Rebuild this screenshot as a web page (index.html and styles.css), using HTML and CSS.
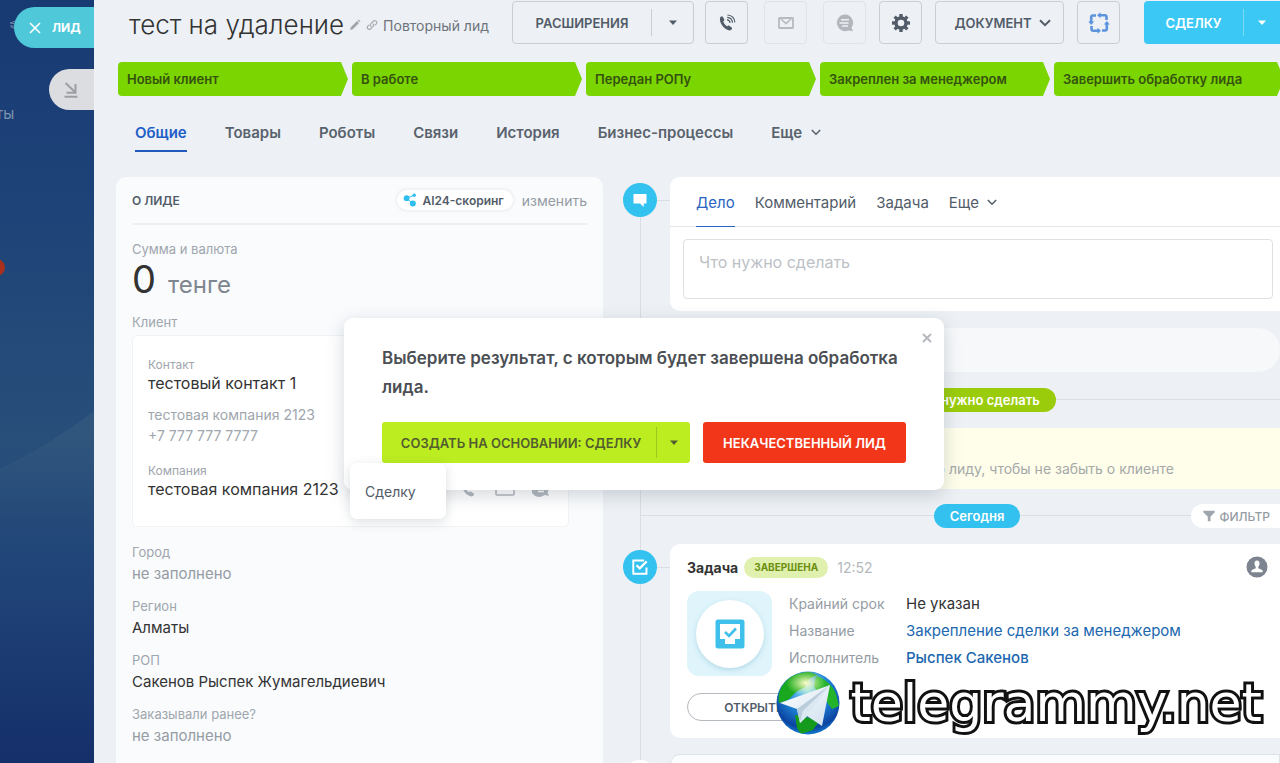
FILE: index.html
```html
<!DOCTYPE html>
<html lang="ru">
<head>
<meta charset="utf-8">
<title>Лид: тест на удаление</title>
<link rel="stylesheet" href="styles.css">
</head>
<body>
<div class="app">
  <aside class="rail">
    <svg class="rail-hill" viewBox="0 0 94 120" preserveAspectRatio="none" aria-hidden="true"><defs><linearGradient id="hill" x1="0" y1="0" x2="0" y2="1"><stop offset="0" stop-color="#5f8090" stop-opacity=".18"/><stop offset="1" stop-color="#5f8090" stop-opacity="0"/></linearGradient></defs><path d="M0 58Q50 34 94 0V120H0z" fill="url(#hill)"/></svg>
    <span class="rail-text">ты</span>
    <span class="rail-dot"></span>
    <svg class="rail-mark" viewBox="0 0 8 10" aria-hidden="true"><path d="M7 1L1 3l6 1M1 6h6M2 7l5 2" fill="none" stroke="#6d87a8" stroke-width="1"/></svg>
    <button class="rail-tab" type="button">
      <svg width="12" height="12" viewBox="0 0 12 12" aria-hidden="true"><path d="M1 1l10 10M11 1L1 11" stroke="#fff" stroke-width="1.6" fill="none"/></svg>
      <span>ЛИД</span>
    </button>
    <button class="rail-tab rail-tab-min" type="button" aria-label="Свернуть">
      <svg width="14" height="16" viewBox="0 0 14 16" aria-hidden="true"><path d="M1.5 1l9.5 9M11.500 2v8.700H2.500M.5 14.800h13" stroke="#9b9ea4" stroke-width="2" fill="none"/></svg>
    </button>
  </aside>

  <main class="main">
    <header class="head">
      <div class="title-group">
        <h1 class="title">тест на удаление</h1>
        <svg width="12" height="12" viewBox="0 0 12 12" aria-hidden="true"><path d="M1 11l.8-2.8L8 2l2 2-6.200 6.200zM8.700 1.300L9.500.5l2 2-.8.8z" fill="#a0a5ab"/></svg>
        <svg width="12" height="12" viewBox="0 0 12 12" aria-hidden="true"><g fill="none" stroke="#a5aab0" stroke-width="1.200"><path d="M5 7.500a2 2 0 0 1 0-2.800L7.500 2a2 2 0 0 1 2.800 2.800L9 6.200"/><path d="M7 4.600a2 2 0 0 1 0 2.800L4.600 10a2 2 0 0 1-2.800-2.800L3 6"/></g></svg>
        <span class="subtitle">Повторный лид</span>
      </div>
      <div class="actions">
        <div class="split">
          <button class="split-main" type="button">РАСШИРЕНИЯ</button>
          <button class="split-caret" type="button" aria-label="Открыть меню"><svg width="10" height="6" viewBox="0 0 10 6" aria-hidden="true"><path d="M1 .5h8L5 5z" fill="currentColor"/></svg></button>
        </div>
        <button class="btn icon-btn" type="button" aria-label="Позвонить"><svg width="18" height="18" viewBox="0 0 18 18" aria-hidden="true"><path d="M2.200 3.500C3 2.300 4.200 1.900 4.900 2.900l1.300 2.300c.5 1-.2 1.600-.9 2.200.7 2 2 3.700 3.900 4.900.8-.7 1.600-1 2.400-.4l2.100 1.500c.9.8.3 1.900-.8 2.700C9 18.500.2 9.500 2.200 3.500z" fill="#525c69"/><path d="M9 5.600c1.800.3 2.900 1.500 3.100 3.300M9.200 3.300c3.100.2 5.100 2.200 5.300 5.400M9.400 1C13.800 1.300 16.500 4 16.800 8.400" fill="none" stroke="#525c69" stroke-width="1.200"/></svg></button>
        <button class="btn icon-btn off gap-m" type="button" disabled aria-label="Письмо"><svg width="16" height="12" viewBox="0 0 16 12" aria-hidden="true"><rect x="1" y="1" width="14" height="10" rx=".5" fill="none" stroke="#b7bbc1" stroke-width="1.800"/><path d="M3 2l5 4.600L13 2" fill="none" stroke="#b7bbc1" stroke-width="1.600"/></svg></button>
        <button class="btn icon-btn off gap-m" type="button" disabled aria-label="Чат"><svg width="18" height="18" viewBox="0 0 18 18" aria-hidden="true"><path d="M9 .5a8.300 8.300 0 1 0 3.500 15.900L17 17.300l-1.500-3.600A8.300 8.300 0 0 0 9 .5z" fill="#b3b7bd"/><path d="M5 5.800h8M3.500 8.900h9M6 12h6" stroke="#eef2f5" stroke-width="1.500"/></svg></button>
        <button class="btn icon-btn gap-s" type="button" aria-label="Настройки"><svg width="18" height="18" viewBox="-9 -9 18 18" aria-hidden="true"><circle r="5" fill="none" stroke="#525c69" stroke-width="3.400"/><g fill="#525c69"><g id="cog"><rect x="-1.700" y="-9" width="3.400" height="3.500"/><rect x="-1.700" y="5.500" width="3.400" height="3.500"/><rect x="-9" y="-1.700" width="3.500" height="3.400"/><rect x="5.500" y="-1.700" width="3.500" height="3.400"/></g><use href="#cog" transform="rotate(45)"/></g></svg></button>
        <button class="btn doc-btn gap-s" type="button">ДОКУМЕНТ <svg width="12" height="8" viewBox="0 0 12 8" aria-hidden="true"><path d="M1 1.200l5 5 5-5" fill="none" stroke="#525c69" stroke-width="2"/></svg></button>
        <button class="btn icon-btn gap-s" type="button" aria-label="Роботы"><svg width="22" height="22" viewBox="0 0 22 22" aria-hidden="true"><g id="arc"><path d="M12 3.200h5a1.500 1.500 0 0 1 1.500 1.500V8" fill="none" stroke="#5b93dc" stroke-width="2.600"/><path d="M12.500.2v6L9 3.200z" fill="#5b93dc"/></g><use href="#arc" transform="rotate(90 11 11)"/><use href="#arc" transform="rotate(180 11 11)"/><use href="#arc" transform="rotate(270 11 11)"/></svg></button>
        <div class="split deal gap-l">
          <button class="split-main" type="button">СДЕЛКУ</button>
          <button class="split-caret" type="button" aria-label="Выбрать результат"><svg width="10" height="6" viewBox="0 0 10 6" aria-hidden="true"><path d="M1 .5h8L5 5z" fill="currentColor"/></svg></button>
        </div>
      </div>
    </header>

    <ol class="stages">
      <li class="stage">Новый клиент</li>
      <li class="stage">В работе</li>
      <li class="stage">Передан РОПу</li>
      <li class="stage">Закреплен за менеджером</li>
      <li class="stage">Завершить обработку лида</li>
    </ol>

    <nav class="tabs">
      <a class="tab tab-on" href="#">Общие</a>
      <a class="tab" href="#">Товары</a>
      <a class="tab" href="#">Роботы</a>
      <a class="tab" href="#">Связи</a>
      <a class="tab" href="#">История</a>
      <a class="tab" href="#">Бизнес-процессы</a>
      <a class="tab" href="#">Еще <svg width="10" height="7" viewBox="0 0 10 7" aria-hidden="true"><path d="M.8 1L5 5.200 9.200 1" fill="none" stroke="currentColor" stroke-width="1.600"/></svg></a>
    </nav>

    <div class="columns">
      <section class="about">
        <div class="about-head">
          <h2 class="about-title">О ЛИДЕ</h2>
          <button class="score" type="button"><svg width="14" height="14" viewBox="0 0 14 14" aria-hidden="true"><g fill="#2fbdf0"><circle cx="3.600" cy="5.200" r="2.900"/><circle cx="11.200" cy="2.300" r="1.700"/><circle cx="9.800" cy="10.600" r="3"/></g><path d="M3.600 5.200l7.600-2.900M3.600 5.200l6.200 5.400" stroke="#2fbdf0"/></svg>AI24-скоринг</button>
          <button class="edit" type="button">изменить</button>
        </div>
        <p class="label sum-label">Сумма и валюта</p>
        <p class="sum"><span class="sum-num">0</span><span class="sum-cur">тенге</span></p>
        <p class="label">Клиент</p>
        <div class="client">
          <p class="small-label">Контакт</p>
          <p class="client-name">тестовый контакт 1</p>
          <p class="client-info">тестовая компания 2123</p>
          <p class="client-info">+7 777 777 7777</p>
          <p class="small-label company-label">Компания</p>
          <div class="client-row">
            <p class="client-name">тестовая компания 2123</p>
            <div class="client-icons">
              <svg width="18" height="18" viewBox="0 0 18 18" aria-hidden="true"><path d="M2.200 3.500C3 2.300 4.200 1.900 4.900 2.900l1.300 2.300c.5 1-.2 1.600-.9 2.200.7 2 2 3.700 3.900 4.900.8-.7 1.600-1 2.400-.4l2.100 1.500c.9.8.3 1.900-.8 2.700C9 18.500.2 9.500 2.200 3.500z" fill="#b3b8be"/></svg>
              <svg width="20" height="16" viewBox="0 0 20 16" aria-hidden="true"><rect x="1" y="1" width="18" height="13" rx="1" fill="none" stroke="#b3b8be" stroke-width="1.600"/></svg>
              <svg width="18" height="18" viewBox="0 0 18 18" aria-hidden="true"><path d="M9 .5a8.300 8.300 0 1 0 3.500 14.500L17 15.800l-1.500-3A8.300 8.300 0 0 0 9 .5z" fill="#b3b8be"/><path d="M5 8h8M6 11.500h6" stroke="#fff" stroke-width="1.500"/></svg>
            </div>
          </div>
        </div>
        <dl class="fields">
          <div class="field"><dt>Город</dt><dd class="empty">не заполнено</dd></div>
          <div class="field"><dt>Регион</dt><dd>Алматы</dd></div>
          <div class="field"><dt>РОП</dt><dd>Сакенов Рыспек Жумагельдиевич</dd></div>
          <div class="field"><dt>Заказывали ранее?</dt><dd class="empty">не заполнено</dd></div>
        </dl>
      </section>

      <section class="timeline">
        <div class="entry">
          <span class="node"><svg width="14" height="14" viewBox="0 0 14 14" aria-hidden="true"><path d="M.5 1h13v9.500h-2.800V14L7 10.500H.5z" fill="#fff"/></svg></span>
          <div class="card composer">
            <div class="composer-tabs">
              <a class="ctab ctab-on" href="#">Дело</a>
              <a class="ctab" href="#">Комментарий</a>
              <a class="ctab" href="#">Задача</a>
              <a class="ctab" href="#">Еще <svg width="10" height="7" viewBox="0 0 10 7" aria-hidden="true"><path d="M.8 1L5 5.200 9.200 1" fill="none" stroke="currentColor" stroke-width="1.500"/></svg></a>
            </div>
            <textarea class="todo" placeholder="Что нужно сделать" aria-label="Что нужно сделать"></textarea>
          </div>
        </div>
        <div class="strip"></div>
        <div class="divider"><span class="pill pill-green">Что нужно сделать</span></div>
        <div class="notice">Запланируйте дело по лиду, чтобы не забыть о клиенте</div>
        <div class="divider divider-day"><span class="pill">Сегодня</span>
          <button class="filter" type="button"><svg width="12" height="12" viewBox="0 0 12 12" aria-hidden="true"><path d="M.3.800h11.400v1.400L7.500 6.800v4.500H4.800V6.800L.3 2.200z" fill="#a0a6ad"/></svg>ФИЛЬТР</button>
        </div>
        <div class="entry">
          <span class="node node-task"><svg width="18" height="18" viewBox="0 0 18 18" aria-hidden="true"><path d="M13 2.500H2.300v13.200h13.200V9.500" fill="none" stroke="#fff" stroke-width="1.900"/><path d="M5.500 7.200l3.200 3.200 7-7" fill="none" stroke="#fff" stroke-width="2.200"/></svg></span>
          <article class="card task">
            <div class="task-head">
              <h3 class="task-title">Задача</h3>
              <span class="badge">ЗАВЕРШЕНА</span>
              <time class="time">12:52</time>
              <svg class="avatar" width="22" height="22" viewBox="0 0 22 22" aria-hidden="true"><circle cx="11" cy="11" r="10.500" fill="#7d848f"/><path d="M11 4.500c-1.900 0-2.700 1.400-2.500 3.200.1 1.500.7 2.300 1.200 3v1.600L5.800 14c-.5.5-.6 1.400-.4 2.200h11.200c.2-.8.1-1.700-.4-2.200l-3.900-1.700v-1.600c.5-.7 1.100-1.500 1.200-3 .2-1.800-.6-3.200-2.500-3.200z" fill="#fff"/></svg>
            </div>
            <div class="task-body">
              <div class="thumb"><div class="thumb-disc"><svg width="30" height="30" viewBox="0 0 30 30" aria-hidden="true"><rect x=".5" y=".5" width="29" height="29" rx="2.500" fill="#3fc0ea"/><path d="M5 5h20v15h-5v5H10v-5H5z" fill="#fff"/><path d="M10 13l4 4 7-7.500" fill="none" stroke="#3fc0ea" stroke-width="2.600"/></svg></div></div>
              <dl class="props">
                <dt>Крайний срок</dt><dd>Не указан</dd>
                <dt>Название</dt><dd><a class="link" href="#">Закрепление сделки за менеджером</a></dd>
                <dt>Исполнитель</dt><dd><a class="link link-strong" href="#">Рыспек Сакенов</a></dd>
              </dl>
            </div>
            <button class="open" type="button">ОТКРЫТЬ</button>
          </article>
        </div>
        <div class="entry entry-next">
          <span class="node node-blank"></span>
          <div class="card card-next"></div>
        </div>
      </section>
    </div>
  </main>

  <div class="dialog" role="dialog" aria-labelledby="dlg-title">
    <button class="dialog-close" type="button" aria-label="Закрыть"><svg width="10" height="10" viewBox="0 0 10 10" aria-hidden="true"><path d="M1 1l8 8M9 1L1 9" stroke="#b5b9be" stroke-width="2" fill="none"/></svg></button>
    <h2 class="dialog-title" id="dlg-title">Выберите результат, с которым будет завершена обработка лида.</h2>
    <div class="dialog-actions">
      <div class="create">
        <button class="create-main" type="button">СОЗДАТЬ НА ОСНОВАНИИ: СДЕЛКУ</button>
        <button class="create-caret" type="button" aria-label="Другие варианты"><svg width="10" height="6" viewBox="0 0 10 6" aria-hidden="true"><path d="M1 .5h8L5 5z" fill="currentColor"/></svg></button>
      </div>
      <button class="junk" type="button">НЕКАЧЕСТВЕННЫЙ ЛИД</button>
    </div>
  </div>
  <div class="menu" role="menu"><button class="menu-item" role="menuitem" type="button">Сделку</button></div>

  <div class="mark">
    <svg width="64" height="64" viewBox="0 0 64 64" aria-hidden="true">
      <defs>
        <radialGradient id="sea" cx=".5" cy=".3" r=".75"><stop offset="0" stop-color="#8fe0fb"/><stop offset=".45" stop-color="#1f86d8"/><stop offset=".8" stop-color="#0a43a0"/><stop offset="1" stop-color="#1c9be6"/></radialGradient>
        <radialGradient id="shine" cx=".5" cy=".5" r=".5"><stop offset="0" stop-color="#fffbd0"/><stop offset="1" stop-color="#e8ff9a" stop-opacity="0"/></radialGradient>
        <linearGradient id="plane" x1="0" y1="0" x2="1" y2="1"><stop offset="0" stop-color="#fff"/><stop offset="1" stop-color="#cfe0ee"/></linearGradient>
        <clipPath id="globe"><circle cx="32" cy="32" r="31"/></clipPath>
      </defs>
      <circle cx="32" cy="32" r="31.500" fill="url(#sea)"/>
      <g clip-path="url(#globe)">
        <path d="M14 5C6 12 1 22 3 32l9-3 8-8 9-5 4-8 8-4-9-4z" fill="#19a81e"/>
        <path d="M40 5c8 2 17 9 20 18l3 12-7 3-5-7-8-6-5-10z" fill="#23b32a"/>
        <path d="M19 44l15 3 8 5-5 7-12 4-4-6z" fill="#149a1c"/>
        <ellipse cx="30" cy="12" rx="20" ry="13" fill="url(#shine)"/>
      </g>
      <path d="M54 14L4 32l17 6 3 14 7-7 15 10z" fill="url(#plane)"/>
      <path d="M54 14L21 38l3 14 3-12z" fill="#b9cddd"/>
      <path d="M54 14L27 40l-3 12 7-7z" fill="#dce8f1"/>
    </svg>
    <span class="mark-text">telegrammy.net</span>
  </div>
</div>
</body>
</html>
```
FILE: styles.css
```css
* { box-sizing: border-box; }
body { margin: 0; font-family: Inter, "Noto Sans", sans-serif; font-size: 14px; color: #333; }
h1, h2, h3, p, ol, dl, dd, dt { margin: 0; padding: 0; font-weight: 400; }
button { font: inherit; color: inherit; background: none; border: 0; padding: 0; margin: 0; cursor: pointer; }
a { color: inherit; text-decoration: none; }
svg { flex: none; display: block; }

.app { position: relative; display: flex; height: 100vh; overflow: hidden; background: #edf1f5; }

/* left rail */
.rail { position: relative; flex: none; width: 94px; padding-top: 7px; display: flex; flex-direction: column; align-items: flex-end; gap: 21px; overflow: hidden; background: linear-gradient(#173a72, #1d4278 25%, #284f7a 58%, #204478 75%, #152f6a); }
.rail-hill { position: absolute; left: 0; top: 411px; width: 94px; height: 120px; }
.rail-text { position: absolute; left: -4px; top: 105px; font-size: 15px; line-height: 18px; color: #7e93af; }
.rail-dot { position: absolute; left: -12px; top: 259px; width: 17px; height: 17px; border-radius: 50%; background: #a8301c; }
.rail-mark { position: absolute; left: 9px; top: 20px; width: 8px; height: 10px; }
.rail-tab { position: relative; height: 41px; width: 80px; padding-left: 15px; display: flex; align-items: center; gap: 11px; border-radius: 21px 0 0 21px; background: #4fc8da; color: #fff; font-size: 12px; font-weight: 700; }
.rail-tab-min { width: 45px; background: #dcdde0; }

/* header */
.main { flex: 1; min-width: 0; overflow: hidden; padding: 1px 0 0 22px; display: flex; flex-direction: column; }
.head { flex: none; display: flex; align-items: center; height: 43px; padding-left: 13px; }
.title-group { display: flex; align-items: center; gap: 5px; padding-top: 5px; white-space: nowrap; }
.title { font-size: 26px; line-height: 32px; font-weight: 300; color: #333; }
.subtitle { font-size: 14px; color: #6d747c; }
.actions { margin-left: auto; display: flex; gap: 11px; flex: none; font-size: 13px; font-weight: 600; color: #525c69; }
.btn, .split { height: 43px; border: 1px solid #c9ced3; border-radius: 4px; display: flex; align-items: center; justify-content: center; }
.icon-btn { width: 43px; }
.off { border-color: #e0e4e8; }
.doc-btn { width: 129px; gap: 7px; padding-left: 6px; }
.gap-s { margin-left: 2px; }
.gap-m { margin-left: 5px; }
.gap-l { margin-left: 13px; }
.split { width: 182px; }
.split-main { flex: 1; height: 27px; border-right: 1px solid #c9ced3; }
.split-caret { width: 41px; height: 27px; display: flex; align-items: center; justify-content: center; }
.deal { width: 136px; border: 0; border-radius: 4px 0 0 4px; background: #3bc8f5; color: #fff; }
.deal .split-main { border-color: #7bdaf8; }
.deal .split-caret { width: 36px; }

.stages { flex: none; list-style: none; display: flex; gap: 4px; margin: 18px -4px 0 2px; }
.stage { flex: 1; height: 34px; line-height: 34px; padding-left: 9px; border-radius: 4px; background: #7bd500; font-size: 13px; font-weight: 600; color: #35520f; white-space: nowrap; clip-path: polygon(0 0, calc(100% - 7px) 0, 100% 50%, calc(100% - 7px) 100%, 0 100%); }

.tabs { flex: none; display: flex; gap: 38px; padding: 19px 0 0 19px; font-size: 15px; font-weight: 600; line-height: 36px; color: #59626d; }
.tab { height: 37px; display: flex; align-items: center; gap: 9px; border-bottom: 2px solid transparent; }
.tab-on { color: #1f5fc8; border-color: #2058bd; }

/* columns */
.columns { flex: 1; min-height: 0; display: grid; grid-template-columns: minmax(0, 487fr) minmax(0, 677fr); padding-top: 25px; }
.about { background: #f9fbfd; border-radius: 10px 10px 0 0; padding: 0 16px; }
.about-head { display: flex; align-items: center; height: 48px; border-bottom: 2px solid #edf0f2; }
.about-title { font-size: 12px; font-weight: 600; color: #525c69; margin-right: auto; }
.score { display: flex; align-items: center; gap: 5px; height: 20px; padding: 0 9px 0 6px; border-radius: 10px; box-shadow: 0 0 3px 1px #e9edf0; background: #fff; font-size: 12px; font-weight: 600; color: #525c69; margin-right: 9px; }
.edit { font-size: 14px; color: #959ca4; }
.label, .fields dt { font-size: 13px; line-height: 18px; color: #a0a6ad; }
.sum-label { margin-top: 15px; }
.sum { height: 55px; line-height: 42px; display: flex; align-items: baseline; gap: 12px; }
.sum-num { font-size: 38px; font-weight: 400; color: #333; }
.sum-cur { font-size: 24px; color: #80868e; }
.client { margin: 4px 18px 0 0; height: 192px; padding: 21px 12px 0 15px; background: #fff; border: 1px solid #f0f3f5; border-radius: 5px; }
.small-label { font-size: 12px; line-height: 16px; color: #a0a6ad; }
.client-name { font-size: 16px; line-height: 20px; color: #333; white-space: nowrap; }
.client-info { font-size: 14px; line-height: 21px; color: #a0a6ad; }
.client-name + .client-info { margin-top: 11px; }
.company-label { margin-top: 17px; }
.client-row { display: flex; justify-content: space-between; align-items: center; }
.client-icons { display: flex; align-items: center; gap: 17px; padding-right: 6px; }
.fields { margin-top: 16px; display: grid; gap: 12px; }
.field { height: 42px; white-space: nowrap; }
.fields dd { font-size: 15px; line-height: 26px; color: #333; }
.fields .empty { color: #959ca4; }

/* timeline */
.timeline { position: relative; padding-left: 20px; }
.timeline::before { content: ""; position: absolute; left: 37px; top: 20px; bottom: 0; width: 1px; background: #d9dee3; }
.entry { display: grid; grid-template-columns: 34px minmax(0, 1fr); column-gap: 13px; position: relative; }
.entry::before { content: ""; position: absolute; left: 34px; top: 23px; width: 13px; height: 1px; background: #d9dee3; }
.node { margin-top: 6px; width: 34px; height: 34px; border-radius: 50%; background: #33c1f0; display: flex; align-items: center; justify-content: center; }
.card { background: #fff; border-radius: 10px 0 0 10px; }
.composer { height: 134px; }
.composer-tabs { display: flex; gap: 20px; height: 50px; padding-left: 26px; border-bottom: 1px solid #e3e6e9; font-size: 15px; color: #525c69; }
.ctab { display: flex; align-items: center; gap: 8px; height: 50px; padding-top: 1px; border-bottom: 1px solid transparent; }
.ctab-on { color: #2a63c0; border-color: #2a63c0; }
.todo { display: block; width: calc(100% - 20px); height: 60px; margin: 12px 0 0 13px; padding: 12px 15px; border: 1px solid #dde1e4; border-radius: 4px; resize: none; background: #fff; font: 16px/20px Inter, "Noto Sans", sans-serif; color: #333; }
.todo::placeholder { color: #bcc1c6; }
.strip { margin: 17px 0 0 47px; height: 44px; border-radius: 22px; background: #f6f8fa; }
.divider { position: relative; display: flex; justify-content: center; align-items: center; height: 24px; margin: 16px 0 0 17px; padding-left: 34px; background: linear-gradient(#d9dee3, #d9dee3) 0 11px / 100% 1px no-repeat; }
.divider-day { margin-top: 15px; }
.pill { height: 24px; line-height: 24px; padding: 0 16px; border-radius: 12px; background: #33c1f0; color: #fff; font-size: 13px; font-weight: 600; }
.pill-green { background: #9bcc0b; }
.notice { position: relative; margin: 16px 0 0 47px; height: 61px; padding: 31px 106px 0 0; text-align: right; white-space: nowrap; background: #fffeeb; font-size: 14px; line-height: 20px; color: #a5a9a8; }
.divider .filter { position: absolute; right: 0; top: 0; height: 24px; padding: 0 10px 0 12px; display: flex; align-items: center; gap: 5px; border-radius: 12px 0 0 12px; background: #fff; font-size: 12px; font-weight: 500; color: #959ca4; }
.divider-day + .entry { margin-top: 16px; }
.task { height: 194px; padding: 12px 12px 0 17px; }
.task-head { display: flex; align-items: center; height: 22px; }
.task-title { font-size: 14px; font-weight: 700; color: #333; }
.badge { margin: 0 9px 0 6px; height: 21px; line-height: 21px; padding: 0 10px; border-radius: 11px; background: #e0f0ae; color: #6c8f10; font-size: 10px; font-weight: 700; }
.time { font-size: 14px; color: #b4b9be; }
.avatar { margin-left: auto; }
.task-body { display: flex; gap: 17px; margin-top: 13px; }
.thumb { flex: none; width: 85px; height: 85px; border-radius: 12px; background: #dff4fb; display: flex; align-items: center; justify-content: center; }
.thumb-disc { width: 68px; height: 68px; border-radius: 50%; background: #fff; box-shadow: 0 2px 5px #b4dbe8; display: flex; align-items: center; justify-content: center; }
.props { display: grid; grid-template-columns: 117px minmax(0, 1fr); grid-auto-rows: 27px; font-size: 14px; line-height: 26px; white-space: nowrap; }
.props dt { color: #959ca4; }
.props dd { font-size: 15px; }
.link { color: #2067b0; }
.link-strong { font-weight: 500; }
.open { display: block; margin-top: 17px; width: 134px; height: 28px; border: 1px solid #b5bac0; border-radius: 14px; font-size: 12px; font-weight: 600; color: #525c69; }
.entry-next { margin-top: 16px; }
.entry-next::before { display: none; }
.node-blank { background: #fff; }
.card-next { height: 60px; border: 1px solid #dde2e6; background: #f9fbfd; }

/* dialog */
.dialog { position: absolute; left: 344px; top: 318px; width: 600px; padding: 26px 38px 27px; background: #fff; border-radius: 9px; box-shadow: 0 5px 18px rgba(60, 75, 90, .22); }
.dialog-close { position: absolute; right: 12px; top: 15px; }
.dialog-title { font-size: 17px; line-height: 29px; font-weight: 600; color: #4b4f54; }
.dialog-actions { display: flex; gap: 13px; margin-top: 20px; font-size: 13px; font-weight: 600; }
.create { display: flex; align-items: center; width: 308px; height: 41px; border-radius: 3px; background: #bbed21; color: #535c2f; }
.create-main { flex: 1; height: 31px; padding-left: 4px; white-space: nowrap; border-right: 1px solid #9cc71d; }
.create-caret { width: 33px; height: 41px; display: flex; align-items: center; justify-content: center; }
.junk { flex: 1; height: 41px; border-radius: 3px; background: #f1361a; color: #fff; white-space: nowrap; }
.menu { position: absolute; left: 350px; top: 463px; width: 96px; padding: 10px 0; background: #fff; border-radius: 7px; box-shadow: 0 3px 12px rgba(60, 75, 90, .18); }
.menu-item { display: block; height: 36px; padding-left: 15px; font-size: 14px; color: #525c69; }

/* site mark */
.mark { position: absolute; right: 18px; bottom: 28px; display: flex; align-items: center; gap: 10px; }
.mark-text { font-family: "DejaVu Sans", sans-serif; font-size: 52px; line-height: 64px; color: #fff; -webkit-text-stroke: 6px #111; paint-order: stroke fill; }
```
